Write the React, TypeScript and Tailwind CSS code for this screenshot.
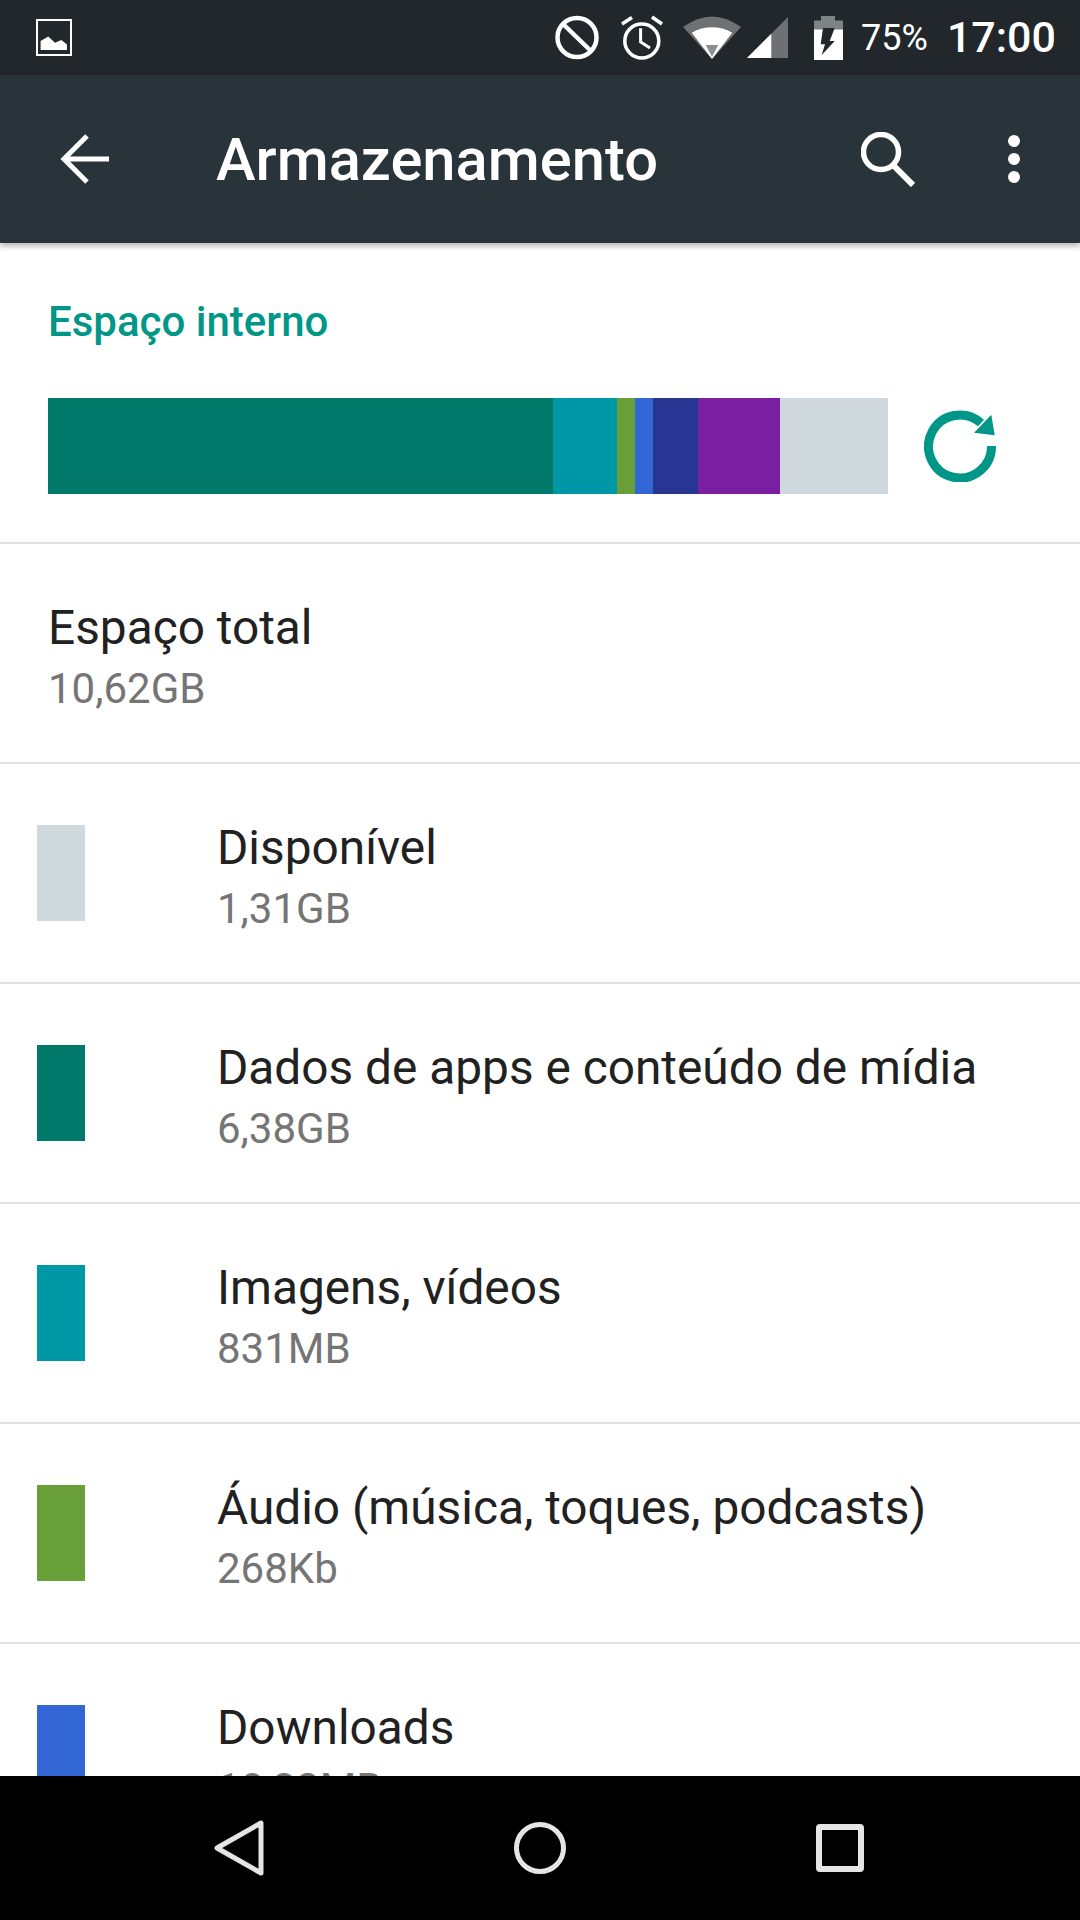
const segments = [
  { color: 'bg-[#00796b]', width: 'w-[505px]' },
  { color: 'bg-[#0097a7]', width: 'w-[64px]' },
  { color: 'bg-[#689f38]', width: 'w-[18px]' },
  { color: 'bg-[#3367d6]', width: 'w-[18px]' },
  { color: 'bg-[#283593]', width: 'w-[45px]' },
  { color: 'bg-[#7b1fa2]', width: 'w-[82px]' },
  { color: 'bg-[#cfd8dc]', width: 'w-[108px]' },
];

const rows = [
  { title: 'Disponível', size: '1,31GB', color: 'bg-[#cfd8dc]' },
  { title: 'Dados de apps e conteúdo de mídia', size: '6,38GB', color: 'bg-[#00796b]' },
  { title: 'Imagens, vídeos', size: '831MB', color: 'bg-[#0097a7]' },
  { title: 'Áudio (música, toques, podcasts)', size: '268Kb', color: 'bg-[#689f38]' },
  { title: 'Downloads', size: '10,32MB', color: 'bg-[#3367d6]' },
];

const StatusBar = () => (
  <div className="h-[75px] shrink-0 bg-[#21272b] flex items-center pl-[36px] pr-[24px] text-white">
    <svg width="36" height="37" viewBox="0 0 36 37">
      <rect x="1" y="1" width="34" height="35" fill="none" stroke="#fff" strokeWidth="2" />
      <path d="M4.600 31V22l7.600-4.400 6.800 6.200 6.300-2.800 5.700 4.500V31z" fill="#fff" />
    </svg>
    <svg className="ml-auto" width="44" height="45" viewBox="0 0 44 45" fill="none" stroke="#fff" strokeWidth="4.500">
      <circle cx="22" cy="22.500" r="19.500" />
      <path d="M8 9l28 27" />
    </svg>
    <svg className="ml-[22px]" width="42" height="46" viewBox="0 0 42 46" fill="none" stroke="#fff" strokeWidth="3.500">
      <circle cx="20.800" cy="26" r="17" />
      <path d="M19.600 13.300V27l9.400 6" strokeWidth="3" />
      <path d="M1 9l10-6.500M41 9L31 2" />
    </svg>
    <svg className="ml-[20px]" width="58" height="43" viewBox="0 0 58 43">
      <path d="M0 11Q29-10 58 11L29 43z" fill="#6d7173" />
      <path d="M8.700 16.700Q29 5.900 49.300 16.700L29 43z" fill="#fff" />
      <path d="M22.700 29h12.600L29 40.700z" fill="#8c8e90" />
    </svg>
    <svg className="ml-[5px]" width="43" height="43" viewBox="0 0 43 43">
      <path d="M1 42L42 1v41z" fill="#6d7173" />
      <path d="M1 42l24.300-24.300V42z" fill="#fff" />
    </svg>
    <svg className="ml-[25px]" width="29" height="44" viewBox="0 0 29 44">
      <path d="M7 0h14v4.500h8V14H0V4.500h7z" fill="#7d8285" />
      <path d="M0 13.500h29V44H0z" fill="#fff" />
      <path d="M9 12h11.700l-5 13h5L7.700 39 11 28.300H6.700z" fill="#21272b" />
    </svg>
    <span className="ml-[18px] font-['Roboto',sans-serif] text-[36px] leading-none">75%</span>
    <span className="ml-[19px] font-['Roboto',sans-serif] font-medium text-[43px] leading-none">17:00</span>
  </div>
);

const Toolbar = () => (
  <div className="relative z-10 h-[168px] shrink-0 bg-[#28343a] flex items-center pl-[60px] pr-[60px] text-white shadow-[0_3px_6px_rgba(0,0,0,0.3)]">
    <svg width="49" height="50" viewBox="0 0 49 50" fill="none" stroke="#fff" strokeWidth="5">
      <path d="M49 25H4M27 2L4 25l23 23" />
    </svg>
    <span className="ml-[107px] mt-[4px] font-['Roboto',sans-serif] font-medium text-[59.700px] leading-none">Armazenamento</span>
    <svg className="ml-auto" width="54" height="55" viewBox="0 0 54 55" fill="none" stroke="#fff" strokeWidth="5.500">
      <circle cx="20" cy="20" r="17.500" />
      <path d="M32 33l20 20" strokeWidth="6" />
    </svg>
    <div className="ml-[93px] flex flex-col gap-[6px]">
      <div className="w-[12px] h-[12px] rounded-full bg-white" />
      <div className="w-[12px] h-[12px] rounded-full bg-white" />
      <div className="w-[12px] h-[12px] rounded-full bg-white" />
    </div>
  </div>
);

const NavBar = () => (
  <div className="h-[144px] shrink-0 bg-black flex items-center justify-center pr-[2px] text-[#e5e5e5]">
    <svg width="50" height="56" viewBox="0 0 50 56" fill="none" stroke="currentColor" strokeWidth="5" strokeLinejoin="round">
      <path d="M47 3v50L3 28z" />
    </svg>
    <svg className="ml-[250px]" width="52" height="52" viewBox="0 0 52 52" fill="none" stroke="currentColor" strokeWidth="5">
      <circle cx="26" cy="26" r="23.500" />
    </svg>
    <svg className="ml-[250px]" width="48" height="48" viewBox="0 0 48 48" fill="none" stroke="currentColor" strokeWidth="6" strokeLinejoin="round">
      <rect x="3" y="3" width="42" height="42" rx="1" />
    </svg>
  </div>
);

const App = () => (
  <div className="w-[1080px] h-[1920px] flex flex-col bg-white overflow-hidden font-['Roboto',sans-serif]">
    <StatusBar />
    <Toolbar />
    <div className="flex-1 min-h-0 overflow-hidden">
      <div className="h-[301px] border-b-2 border-[#e0e0e0] pl-[48px]">
        <div className="pt-[56px] text-[42px] leading-[46px] font-medium text-[#009688]">Espaço interno</div>
        <div className="mt-[53px] flex items-center">
          <div className="flex h-[96px]">
            {segments.map((s, i) => (
              <div key={i} className={`${s.color} ${s.width}`} />
            ))}
          </div>
          <svg className="ml-[36px]" width="72" height="72" viewBox="0 0 72 72" fill="none">
            <path d="M57 13A31.500 31.500 0 1 0 67.500 36" stroke="#009688" strokeWidth="9" />
            <path d="M50 22.700L67.300 4.700l3.400 20.600z" fill="#009688" />
          </svg>
        </div>
      </div>
      <div className="h-[220px] border-b-2 border-[#e0e0e0] pl-[48px] pt-[7px] flex flex-col justify-center">
        <div className="text-[47.800px] leading-[64px] text-[#212121]">Espaço total</div>
        <div className="text-[42px] leading-[58px] text-[#757575]">10,62GB</div>
      </div>
      {rows.map((r) => (
        <div key={r.title} className="h-[220px] border-b-2 border-[#e0e0e0] pl-[37px] flex items-center">
          <div className={`w-[48px] h-[96px] shrink-0 ${r.color}`} />
          <div className="ml-[132px] pt-[7px]">
            <div className="text-[47.800px] leading-[64px] text-[#212121]">{r.title}</div>
            <div className="text-[42px] leading-[58px] text-[#757575]">{r.size}</div>
          </div>
        </div>
      ))}
    </div>
    <NavBar />
  </div>
);

export default App;
